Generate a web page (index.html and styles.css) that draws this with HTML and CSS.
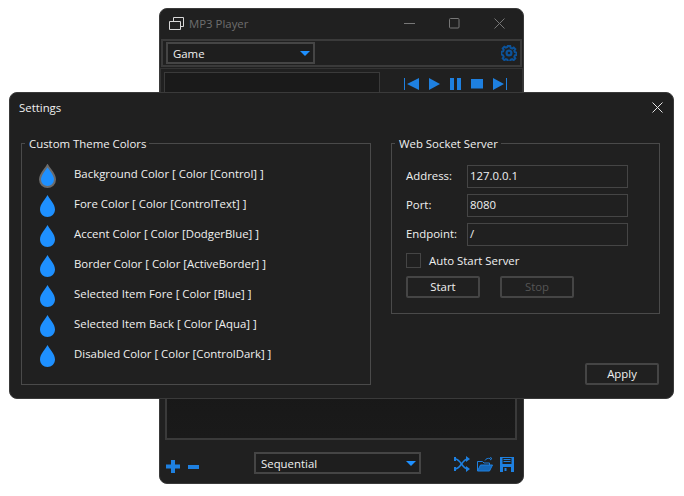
FILE: index.html
```html
<!DOCTYPE html>
<html>
<head>
  <title>MP3 Player</title>
  <link rel="stylesheet" href="styles.css">
</head>
<body>
  <!-- Main player window -->
  <div class="window player">
    <div class="titlebar">
      <svg class="app-icon" width="15" height="13" viewBox="0 0 15 13" fill="none" stroke="#d8d8d8"><path d="M4.500 4.500V.5h10v9h-3"/><path d="M.5 4.500h11v8H.5z"/></svg>
      <span class="app-title">MP3 Player</span>
      <div class="caption">
        <svg width="11" height="11" viewBox="0 0 11 11" stroke="#777"><path d="M0 5.500h11"/></svg>
        <svg width="11" height="11" viewBox="0 0 11 11" fill="none" stroke="#777"><rect x=".5" y=".5" width="9.500" height="9.500" rx="1"/></svg>
        <svg width="11" height="11" viewBox="0 0 11 11" stroke="#777"><path d="M.5 .5l10 10M10.500 .5l-10 10"/></svg>
      </div>
    </div>

    <div class="toolbar">
      <div class="combo game-combo"><span>Game</span><i class="arrow"></i></div>
      <svg class="gear" width="16" height="16" viewBox="0 0 16 16" fill="none" stroke="#0c5299" stroke-width="2.200"><circle cx="8" cy="8" r="2.400"/><path stroke-width="2" d="M6.800 1h2.400l.4 1.800 1.500.7 1.600-1 1.600 1.700-1 1.500.6 1.500 1.700.4v2.400l-1.700.4-.6 1.500 1 1.500-1.600 1.700-1.600-1-1.500.7-.4 1.800H6.800l-.4-1.800-1.500-.7-1.600 1-1.600-1.700 1-1.500-.6-1.500L.4 9.200V6.800l1.700-.4.600-1.500-1-1.500 1.600-1.700 1.600 1 1.500-.7z"/></svg>
    </div>

    <div class="now-playing">
      <div class="track-box"></div>
      <div class="transport">
        <svg width="15" height="12" viewBox="0 0 15 12" fill="#1e80e0"><path d="M0 0h1v12H0zM3 6l12-6v12z"/></svg>
        <svg width="11" height="12" viewBox="0 0 11 12" fill="#1e80e0"><path d="M0 0l11 6-11 6z"/></svg>
        <svg width="11" height="12" viewBox="0 0 11 12" fill="#1e80e0"><path d="M0 0h4v12H0zM7 0h4v12H7z"/></svg>
        <svg width="12" height="12" viewBox="0 0 12 12" fill="#1e80e0"><path d="M0 1h12v9.500H0z"/></svg>
        <svg width="14" height="12" viewBox="0 0 14 12" fill="#1e80e0"><path d="M13 0h1v12h-1zM0 0l11 6-11 6z"/></svg>
      </div>
    </div>

    <div class="playlist"></div>

    <div class="footer">
      <div class="footer-left">
        <svg width="14" height="13" viewBox="0 0 14 13" fill="#1e80e0"><path d="M5 0h4v4.500h5v4H9V13H5V8.500H0v-4h5z"/></svg>
        <svg width="11" height="4" viewBox="0 0 11 4" fill="#1e80e0"><path d="M0 0h11v4H0z"/></svg>
      </div>
      <div class="combo mode-combo"><span>Sequential</span><i class="arrow"></i></div>
      <div class="footer-right">
        <svg width="16" height="16" viewBox="0 0 16 16" fill="none" stroke="#1e80e0" stroke-width="1.600"><path d="M1 3c6 0 7 10 13 10M1 13c6 0 7-10 13-10"/><path fill="#1e80e0" stroke="none" d="M12 0l4 3-4 3zM12 10l4 3-4 3zM0 1h2v4H0zM0 11h2v4H0z"/></svg>
        <svg width="16" height="15" viewBox="0 0 16 15" fill="none" stroke="#1e80e0"><path d="M.5 14V4.500h5l1.500 1.500h5.500v2"/><path fill="#1668b8" d="M.5 14l3-6h12l-3 6z"/><path d="M8 3.500c1-2 3-2.500 5-2M13 .5l2 1-2 1.500"/></svg>
        <svg width="14" height="15" viewBox="0 0 14 15" fill="#1e80e0"><path fill-rule="evenodd" d="M0 0h14v15H0zM2.500 1v6h9V1zM3 10v5h8v-5z"/><path d="M3.500 2h7v1h-7zM3.500 4h7v1h-7zM4.500 11h2v3h-2z"/></svg>
      </div>
    </div>
  </div>

  <!-- Settings dialog -->
  <div class="window settings">
    <div class="dialog-head">
      <span>Settings</span>
      <svg width="11" height="11" viewBox="0 0 11 11" stroke="#e4e4e4"><path d="M.5 .5l10 10M10.500 .5l-10 10"/></svg>
    </div>

    <div class="dialog-body">
      <fieldset class="group theme-group">
        <legend>Custom Theme Colors</legend>
        <div class="color-row">
          <svg class="drop" width="17" height="24" viewBox="0 0 17 24"><path fill="#1e90ff" stroke="#6b6b6b" stroke-width="2" d="M8.500 1.500C6 6 1 10 1 15.500 1 20 4.500 23 8.500 23S16 20 16 15.500C16 10 11 6 8.500 1.500z"/></svg>
          <span>Background Color [ Color [Control] ]</span>
        </div>
        <div class="color-row">
          <svg class="drop" width="17" height="24" viewBox="0 0 17 24"><path fill="#1e90ff" d="M8.500 1C6 6 1 10 1 15.500 1 20 4.500 23 8.500 23S16 20 16 15.500C16 10 11 6 8.500 1z"/></svg>
          <span>Fore Color [ Color [ControlText] ]</span>
        </div>
        <div class="color-row">
          <svg class="drop" width="17" height="24" viewBox="0 0 17 24"><path fill="#1e90ff" d="M8.500 1C6 6 1 10 1 15.500 1 20 4.500 23 8.500 23S16 20 16 15.500C16 10 11 6 8.500 1z"/></svg>
          <span>Accent Color [ Color [DodgerBlue] ]</span>
        </div>
        <div class="color-row">
          <svg class="drop" width="17" height="24" viewBox="0 0 17 24"><path fill="#1e90ff" d="M8.500 1C6 6 1 10 1 15.500 1 20 4.500 23 8.500 23S16 20 16 15.500C16 10 11 6 8.500 1z"/></svg>
          <span>Border Color [ Color [ActiveBorder] ]</span>
        </div>
        <div class="color-row">
          <svg class="drop" width="17" height="24" viewBox="0 0 17 24"><path fill="#1e90ff" d="M8.500 1C6 6 1 10 1 15.500 1 20 4.500 23 8.500 23S16 20 16 15.500C16 10 11 6 8.500 1z"/></svg>
          <span>Selected Item Fore [ Color [Blue] ]</span>
        </div>
        <div class="color-row">
          <svg class="drop" width="17" height="24" viewBox="0 0 17 24"><path fill="#1e90ff" d="M8.500 1C6 6 1 10 1 15.500 1 20 4.500 23 8.500 23S16 20 16 15.500C16 10 11 6 8.500 1z"/></svg>
          <span>Selected Item Back [ Color [Aqua] ]</span>
        </div>
        <div class="color-row">
          <svg class="drop" width="17" height="24" viewBox="0 0 17 24"><path fill="#1e90ff" d="M8.500 1C6 6 1 10 1 15.500 1 20 4.500 23 8.500 23S16 20 16 15.500C16 10 11 6 8.500 1z"/></svg>
          <span>Disabled Color [ Color [ControlDark] ]</span>
        </div>
      </fieldset>

      <div class="right-col">
        <fieldset class="group server-group">
          <legend>Web Socket Server</legend>
          <div class="field"><label>Address:</label><div class="input">127.0.0.1</div></div>
          <div class="field"><label>Port:</label><div class="input">8080</div></div>
          <div class="field"><label>Endpoint:</label><div class="input">/</div></div>
          <div class="check-row"><i class="checkbox"></i><span>Auto Start Server</span></div>
          <div class="button-row">
            <div class="btn">Start</div>
            <div class="btn disabled">Stop</div>
          </div>
        </fieldset>
        <div class="btn apply">Apply</div>
      </div>
    </div>
  </div>
</body>
</html>
```

FILE: styles.css
```css
/* Common styles */
body {
  background-color: #ffffff;
  color: #f0f0f0;
  font-family: "Open Sans", "Noto Sans", Arial, sans-serif;
  font-size: 11.4px;
  margin: 0;
  padding: 0;
}

/* Window styles */
.window {
  position: absolute;
  box-sizing: border-box;
  background-color: #202020;
  border: 1px solid #3a3a3a;
  border-radius: 8px;
  display: flex;
  flex-direction: column;
}

.player {
  left: 159px;
  top: 8px;
  width: 365px;
  height: 476px;
}

.settings {
  left: 9px;
  top: 92px;
  width: 665px;
  height: 307px;
}

/* Player title bar */
.titlebar {
  height: 30px;
  box-sizing: border-box;
  display: flex;
  align-items: center;
  padding: 0 18px 2px 9px;
  flex: none;
}

.app-title {
  color: #6e6e6e;
  margin-left: 5px;
}

.caption {
  margin-left: auto;
  display: flex;
  gap: 34px;
}

/* Toolbar */
.toolbar {
  height: 28px;
  box-sizing: border-box;
  flex: none;
  margin: 0 1px;
  border: 2px solid #3a3a3a;
  display: flex;
  align-items: center;
  justify-content: space-between;
  padding: 0 3px;
}

.combo {
  box-sizing: border-box;
  border: 2px solid #454545;
  display: flex;
  align-items: center;
  justify-content: space-between;
  padding: 0 3px 0 5px;
  background-color: #1e1e1e;
}

.game-combo {
  width: 149px;
  height: 22px;
}

.mode-combo {
  width: 167px;
  height: 22px;
}

.arrow {
  width: 0;
  height: 0;
  border-left: 5.5px solid transparent;
  border-right: 5.5px solid transparent;
  border-top: 5px solid #1e90ff;
}

/* Now playing */
.now-playing {
  flex: none;
  height: 50px;
  margin-top: 1px;
  border: 1px solid #333333;
  padding: 3px 0 0 3px;
  display: flex;
}

.track-box {
  width: 216px;
  height: 40px;
  box-sizing: border-box;
  border: 1px solid #3a3a3a;
  background-color: #1a1a1a;
}

.transport {
  display: flex;
  align-items: flex-start;
  gap: 10px;
  padding: 6px 0 0 24px;
}

/* Playlist */
.playlist {
  flex: 1;
  margin: 0 6px 0 5px;
  box-sizing: border-box;
  border: 2px solid #3a3a3a;
  background: linear-gradient(#0e0e0e, #1a1a1a);
}

/* Footer */
.footer {
  flex: none;
  height: 43px;
  box-sizing: border-box;
  display: flex;
  align-items: center;
  padding: 3px 9px 0 6px;
}

.footer-left {
  width: 88px;
  display: flex;
  align-items: center;
  gap: 8px;
  flex: none;
  padding-top: 7px;
  box-sizing: border-box;
}

.footer-right {
  margin-left: auto;
  display: flex;
  align-items: center;
  gap: 7px;
  padding-top: 2px;
}

/* Settings dialog */
.dialog-head {
  height: 30px;
  box-sizing: border-box;
  flex: none;
  display: flex;
  align-items: center;
  justify-content: space-between;
  padding: 0 10px 1px 9px;
}

.dialog-body {
  flex: 1;
  display: flex;
  padding: 11px 13px 13px 11px;
  gap: 20px;
}

.group {
  box-sizing: border-box;
  margin: 0;
  border: 1px solid #4a4a4a;
  padding: 0;
  min-width: 0;
}

.group legend {
  padding: 2px 3px 0 4px;
  margin-left: 3px;
  line-height: 16px;
}

.theme-group {
  width: 350px;
  padding-top: 8px;
}

.color-row {
  height: 30px;
  display: flex;
  align-items: center;
  padding-left: 17px;
}

.drop {
  margin-top: 2px;
}

.color-row span {
  margin-left: 18px;
  margin-top: -4px;
}

.right-col {
  flex: 1;
  display: flex;
  flex-direction: column;
}

.server-group {
  padding: 13px 14px 0;
  height: 180px;
}

.server-group legend {
  margin-left: -11px;
}

.field {
  display: flex;
  align-items: center;
  height: 23px;
  margin-bottom: 6px;
}

.field label {
  width: 61px;
  flex: none;
  margin-top: -3px;
}

.input {
  box-sizing: border-box;
  width: 161px;
  height: 23px;
  border: 1px solid #454545;
  padding-left: 2px;
  line-height: 19px;
}

.check-row {
  display: flex;
  align-items: center;
  gap: 8px;
  margin-top: 1px;
  height: 17px;
}

.checkbox {
  width: 15px;
  height: 15px;
  box-sizing: border-box;
  border: 1px solid #454545;
}

.button-row {
  display: flex;
  gap: 20px;
  margin-top: 7px;
}

.btn {
  box-sizing: border-box;
  width: 74px;
  height: 22px;
  border: 2px solid #454545;
  border-radius: 2px;
  text-align: center;
  line-height: 17px;
}

.btn.disabled {
  color: #555555;
}

.apply {
  margin-top: auto;
  align-self: flex-end;
  margin-right: 1px;
}
```
